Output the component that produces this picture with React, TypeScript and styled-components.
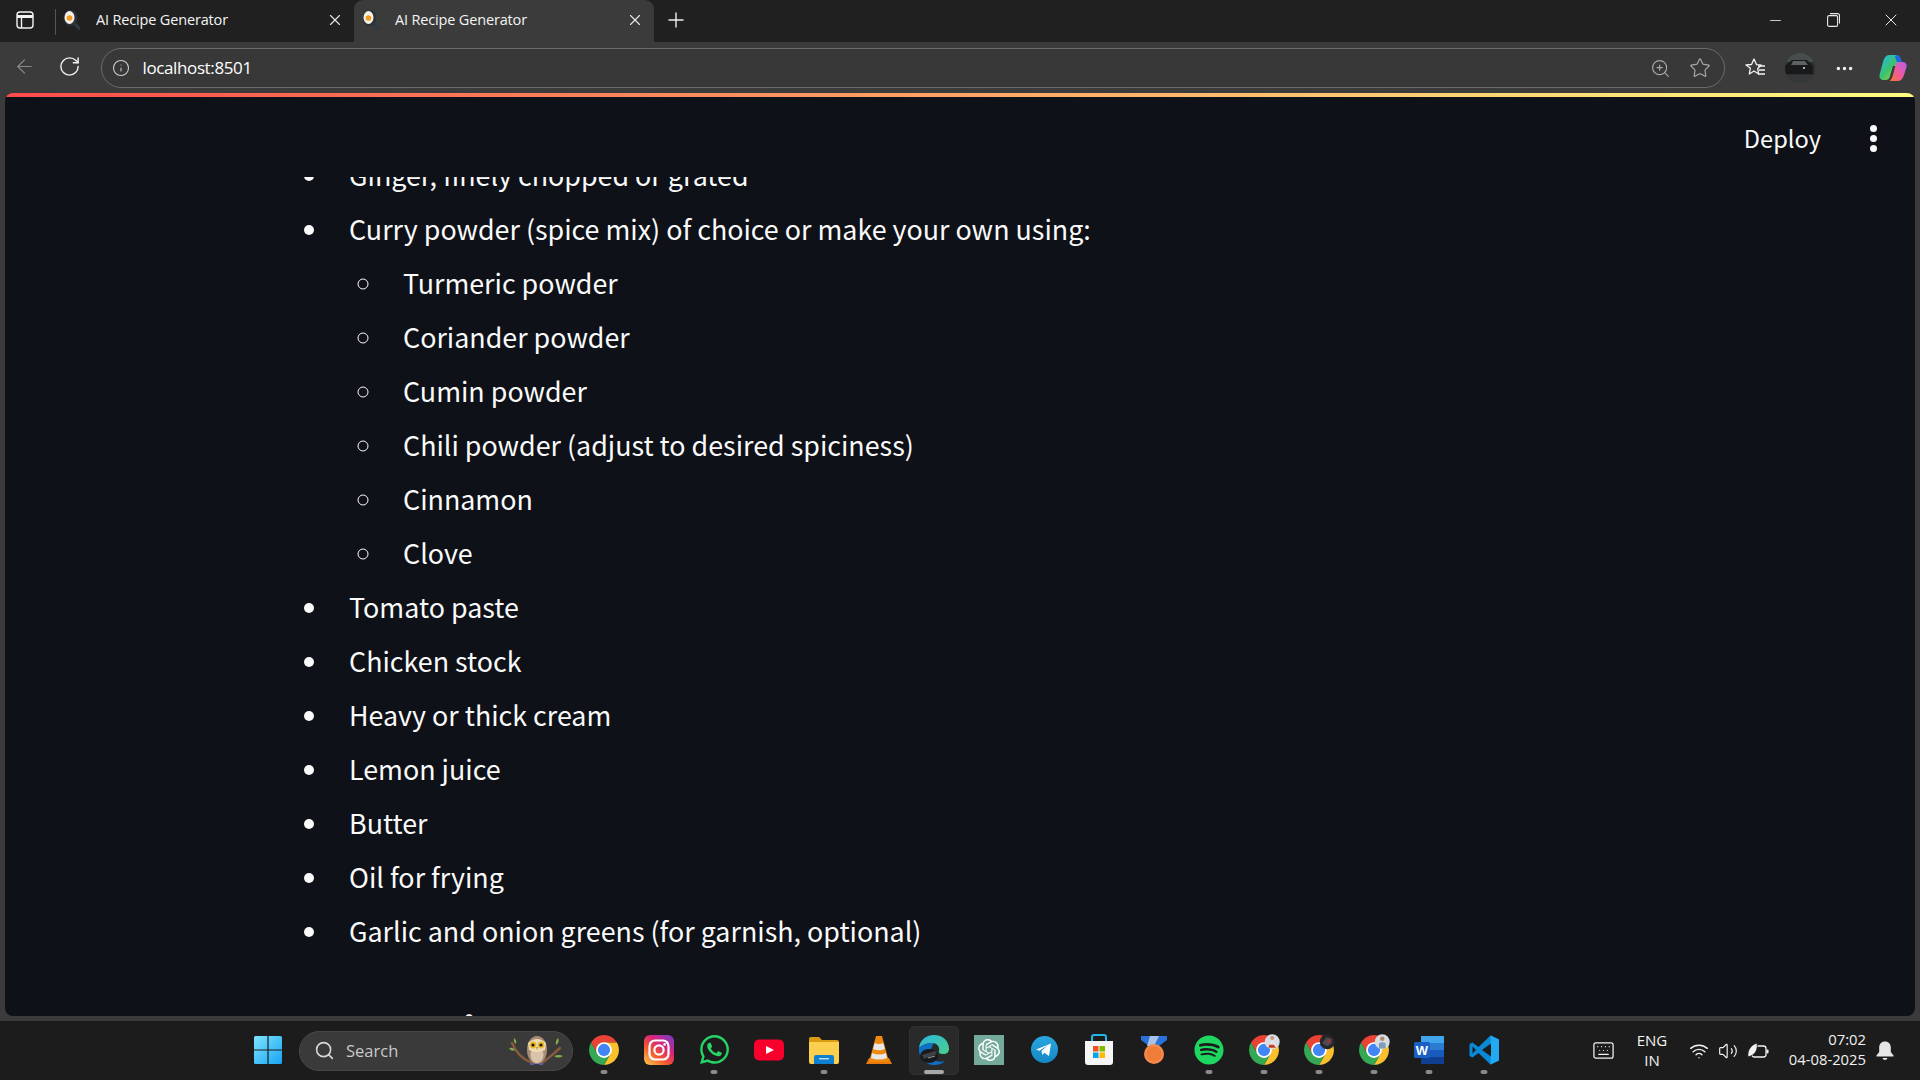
import React from "react";
import { createGlobalStyle, styled } from "styled-components";
import {
  ArrowLeft,
  Info,
  Keyboard,
  Minus,
  MoreHorizontal,
  Plus,
  RotateCw,
  Search,
  Star,
  Volume2,
  Wifi,
  X,
  ZoomIn,
} from "lucide-react";
import { FaSpotify, FaWhatsapp } from "react-icons/fa";
import { SiOpenai } from "react-icons/si";

const GlobalStyle = createGlobalStyle`
  html, body {
    margin: 0;
    padding: 0;
    height: 100%;
    overflow: hidden;
    background: #3b3b3b;
  }
  #root {
    height: 100%;
  }
`;

const Screen = styled.div`
  display: flex;
  flex-direction: column;
  height: 1080px;
  width: 1920px;
  font-family: "Open Sans", "Noto Sans", sans-serif;
  color: #fff;
`;

/* ---------- tab strip ---------- */

const TabStrip = styled.div`
  display: flex;
  align-items: stretch;
  height: 42px;
  flex: none;
  background: #202020;
`;

const SideButton = styled.div`
  width: 50px;
  display: flex;
  align-items: center;
  justify-content: center;
  padding-bottom: 3px;
`;

const TabDivider = styled.div`
  width: 1px;
  height: 26px;
  margin: 9px 0 0 5px;
  background: #555;
`;

const Tab = styled.div<{ $active?: boolean }>`
  display: flex;
  align-items: center;
  box-sizing: border-box;
  width: ${(p) => (p.$active ? "300px" : "298px")};
  padding: 0 10px 3px ${(p) => (p.$active ? "8px" : "7px")};
  border-radius: 9px 9px 0 0;
  background: ${(p) => (p.$active ? "#3b3b3b" : "transparent")};
`;

const TabTitle = styled.span`
  flex: 1;
  margin-left: 15px;
  font-size: 14.5px;
  letter-spacing: -0.16px;
  color: #f4f4f4;
`;

const NewTab = styled.div`
  width: 44px;
  display: flex;
  align-items: center;
  justify-content: center;
  padding-bottom: 3px;
  color: #f0f0f0;
`;

const WindowControls = styled.div`
  margin-left: auto;
  display: flex;
  color: #e8e8e8;
`;

const WindowButton = styled.div`
  width: 58px;
  display: flex;
  align-items: center;
  justify-content: center;
  padding-bottom: 2px;
`;

/* ---------- toolbar ---------- */

const Toolbar = styled.div`
  display: flex;
  align-items: center;
  height: 51px;
  flex: none;
  padding: 0 0 2px 2px;
  box-sizing: border-box;
  background: #3b3b3b;
  color: #f0f0f0;
`;

const NavButton = styled.div<{ $dim?: boolean }>`
  width: 45px;
  display: flex;
  justify-content: center;
  color: ${(p) => (p.$dim ? "#8a8a8a" : "#f2f2f2")};
`;

const Omnibox = styled.div`
  display: flex;
  align-items: center;
  box-sizing: border-box;
  width: 1624px;
  height: 40px;
  margin-left: 8.5px;
  margin-top: 3px;
  padding: 0 13px 0 10px;
  border: 1.5px solid #6b6b6b;
  border-radius: 20px;
  background: #383838;
`;

const Url = styled.span`
  margin-left: 13px;
  padding-bottom: 2px;
  font-size: 17px;
  letter-spacing: -0.38px;
  color: #fff;
`;

const OmniActions = styled.div`
  margin-left: auto;
  display: flex;
  align-items: center;
  gap: 18px;
  color: #a8a8a8;
`;

const ToolbarActions = styled.div`
  display: flex;
  align-items: center;
  margin-top: 3px;
  padding-left: 15px;
  gap: 15px;
`;

const ActionSlot = styled.div`
  width: 30px;
  height: 30px;
  display: flex;
  align-items: center;
  justify-content: center;
`;

const CopilotSlot = styled(ActionSlot)`
  margin-left: 3px;
`;

/* ---------- page ---------- */

const ViewportFrame = styled.div`
  flex: 1;
  min-height: 0;
  display: flex;
  padding: 0 5px 5px 5px;
  background: #3b3b3b;
`;

const Page = styled.div`
  flex: 1;
  display: flex;
  flex-direction: column;
  overflow: hidden;
  border-radius: 8px;
  background: #0e1117;
  font-family: "Noto Sans CJK SC", "Noto Sans", sans-serif;
`;

const Decoration = styled.div`
  height: 4px;
  flex: none;
  background: linear-gradient(90deg, #ff4b4b, #fffd80);
`;

const Header = styled.div`
  height: 80px;
  flex: none;
  display: flex;
  align-items: flex-start;
  justify-content: flex-end;
  padding: 23px 38px 0 0;
  box-sizing: border-box;
`;

const DeployLabel = styled.span`
  font-size: 23.6px;
  line-height: 36px;
  margin-right: 49px;
  color: #fafafa;
`;

const Kebab = styled.div`
  display: flex;
  flex-direction: column;
  gap: 3px;
  padding-top: 5px;
`;

const KebabDot = styled.span`
  width: 7px;
  height: 7px;
  border-radius: 50%;
  background: #fafafa;
`;

const Scroller = styled.div`
  flex: 1;
  min-height: 0;
  overflow: hidden;
  padding-left: 293px;
`;

const Document = styled.div`
  margin-top: -29px;
`;

const List = styled.ul<{ $nested?: boolean }>`
  margin: 0;
  padding: 0 0 0 ${(p) => (p.$nested ? "35.5px" : "32.5px")};
  list-style-type: ${(p) => (p.$nested ? "circle" : "disc")};
`;

const Item = styled.li`
  padding-left: 18.5px;
  font-size: 26.85px;
  line-height: 54px;
  color: #fafafa;
`;

const SectionHeading = styled.h4`
  margin: 46px 0 0 -2px;
  font-size: 43px;
  line-height: 52px;
  font-weight: 700;
  color: #fafafa;
`;

/* ---------- taskbar ---------- */

const Taskbar = styled.div`
  display: flex;
  align-items: center;
  height: 59px;
  flex: none;
  padding-left: 240px;
  background: #1c1c1c;
`;

const Cell = styled.div<{ $active?: boolean }>`
  position: relative;
  width: 55px;
  height: 49px;
  flex: none;
  display: flex;
  align-items: center;
  justify-content: center;
  box-sizing: border-box;
  padding-bottom: 2px;
  &::before {
    content: "";
    position: absolute;
    inset: 0 2.5px;
    border-radius: 5px;
    background: ${(p) => (p.$active ? "#2a2a2a" : "transparent")};
    border: ${(p) => (p.$active ? "1px solid #303030" : "none")};
    box-sizing: border-box;
  }
  & > svg {
    position: relative;
  }
`;

const RunDot = styled.span<{ $active?: boolean }>`
  position: absolute;
  bottom: 1px;
  left: 50%;
  transform: translateX(-50%);
  width: ${(p) => (p.$active ? "20px" : "7px")};
  height: 4px;
  border-radius: 2px;
  background: ${(p) => (p.$active ? "#a8a8a8" : "#8a8a8a")};
`;

const SearchPill = styled.div`
  display: flex;
  align-items: center;
  box-sizing: border-box;
  width: 274px;
  height: 40px;
  margin: 0 3.5px 0 4px;
  padding: 0 8px 0 14px;
  border-radius: 20px;
  border: 1px solid #484848;
  background: #3a3a3a;
  color: #d8d8d8;
`;

const SearchLabel = styled.span`
  margin-left: 11px;
  flex: 1;
  font-size: 16.5px;
  color: #c9c9c9;
`;

const Tray = styled.div`
  margin-left: auto;
  display: flex;
  align-items: center;
  padding-right: 26px;
  color: #f2f2f2;
`;

const LangBlock = styled.div`
  width: 50px;
  margin: 0 12px 0 12px;
  padding-bottom: 2px;
  text-align: center;
  font-size: 15px;
  line-height: 20px;
`;

const TrayIcons = styled.div`
  display: flex;
  align-items: center;
  gap: 9px;
`;

const Clock = styled.div`
  margin-left: 7px;
  padding-bottom: 3px;
  width: 90px;
  text-align: right;
  font-size: 14.8px;
  line-height: 20px;
`;

const BellSlot = styled.div`
  margin-left: 10px;
  display: flex;
`;

/* ---------- drawn icons ---------- */

function SidebarIcon() {
  return (
    <svg width="18" height="18" viewBox="0 0 18 18" fill="none" stroke="#f2f2f2" strokeWidth="1.4">
      <rect x="1" y="1" width="16" height="16" rx="3" />
      <path d="M1 5.5h16" strokeWidth="3" />
      <path d="M5.5 5.5V17" />
    </svg>
  );
}

function Favicon() {
  return (
    <svg width="18" height="20" viewBox="0 0 18 20" style={{ flex: "none" }}>
      <path d="M11 13l5 5.5" stroke="#2e3a44" strokeWidth="3" strokeLinecap="round" />
      <ellipse cx="7.5" cy="8" rx="7" ry="8" fill="#2c3238" />
      <ellipse cx="6.5" cy="7.5" rx="5" ry="6.5" fill="#f4f2ea" />
      <circle cx="6.5" cy="8" r="2.8" fill="#f59a1c" />
    </svg>
  );
}

function Chrome({ badge }: { badge?: "light" | "dark" | "man" }) {
  return (
    <svg width="36" height="36" viewBox="0 0 48 48">
      <path d="M41.3 14A20 20 0 0 0 6.7 14L15.3 29 24 24V14Z" fill="#ea4335" />
      <path d="M41.3 14H24L32.7 29 24 44A20 20 0 0 0 41.3 14Z" fill="#fbc02d" />
      <path d="M6.7 14L15.3 29H32.7L24 44A20 20 0 0 1 6.7 14Z" fill="#34a853" />
      <circle cx="24" cy="24" r="10.5" fill="#fff" />
      <circle cx="24" cy="24" r="8.2" fill="#4285f4" />
      {badge && (
        <g>
          <circle
            cx="35"
            cy="13"
            r="10"
            fill={badge === "dark" ? "#26262a" : "#d8dde2"}
          />
          {badge === "light" && (
            <>
              <circle cx="35" cy="8" r="2.6" fill="#c79a7c" />
              <path d="M32 20l1.5-9h4l2.5 9z" fill="#e3e3e3" />
              <path d="M30 21h10l-3-4h-6z" fill="#c63a22" />
            </>
          )}
          {badge === "dark" && (
            <>
              <path d="M28 15l6-8 7 2v6l-6 4z" fill="#4a4a50" />
              <circle cx="37" cy="12" r="2.4" fill="#a23030" />
            </>
          )}
          {badge === "man" && (
            <>
              <circle cx="35" cy="9" r="3" fill="#b58a6c" />
              <path d="M30.5 22v-7q4.5-3 9 0v7z" fill="#7f9cbc" />
            </>
          )}
        </g>
      )}
    </svg>
  );
}

function WindowsLogo() {
  return (
    <svg width="30" height="30" viewBox="0 0 30 30">
      <defs>
        <linearGradient id="winA" x1="0" y1="0" x2="1" y2="1">
          <stop offset="0" stopColor="#7fe4ff" />
          <stop offset="1" stopColor="#18a4f2" />
        </linearGradient>
      </defs>
      <path
        d="M1 2.5a1.5 1.5 0 0 1 1.5-1.5H14.4V14.4H1ZM15.6 1H27.5A1.5 1.5 0 0 1 29 2.5V14.4H15.6ZM1 15.6H14.4V29H2.5A1.5 1.5 0 0 1 1 27.5ZM15.6 15.6H29V27.5A1.5 1.5 0 0 1 27.5 29H15.6Z"
        fill="url(#winA)"
      />
    </svg>
  );
}

function Owl() {
  return (
    <svg width="56" height="34" viewBox="0 0 56 34" style={{ flex: "none" }}>
      <path d="M4 9q6 14 18 19l12 1 10-8 8-7" stroke="#8a5a3c" strokeWidth="2.4" fill="none" strokeLinecap="round" />
      <path d="M6 4q3 2 2 6-3-2-2-6zM1 14q4-1 6 2-4 2-6-2zM50 4q2 4-2 7-1-4 2-7zM46 22q5-2 9 0-5 3-9 0z" fill="#7fae4a" />
      <ellipse cx="29" cy="16" rx="10" ry="14" fill="#a98a74" />
      <ellipse cx="29" cy="21" rx="6.5" ry="8" fill="#d8c3ab" />
      <path d="M20 9q9-8 18 0l-1 7q-8 4-16 0z" fill="#ecdcb4" />
      <circle cx="25" cy="11" r="3.4" fill="#e8b92e" />
      <circle cx="33" cy="11" r="3.4" fill="#e8b92e" />
      <circle cx="25" cy="11" r="1.6" fill="#1c1c1c" />
      <circle cx="33" cy="11" r="1.6" fill="#1c1c1c" />
      <path d="M28 13h2l-1 3z" fill="#c88a2c" />
      <path d="M22 29h4v2h-4zM31 29h4v2h-4z" fill="#5a5cb0" />
    </svg>
  );
}

function Instagram() {
  return (
    <svg width="30" height="30" viewBox="0 0 30 30">
      <defs>
        <linearGradient id="ig" x1="0.1" y1="1" x2="0.9" y2="0">
          <stop offset="0" stopColor="#fdc24c" />
          <stop offset="0.35" stopColor="#f4582c" />
          <stop offset="0.65" stopColor="#d9247c" />
          <stop offset="1" stopColor="#7a3cc4" />
        </linearGradient>
      </defs>
      <rect width="30" height="30" rx="6" fill="url(#ig)" />
      <rect x="5.5" y="5.5" width="19" height="19" rx="5.5" fill="none" stroke="#fff" strokeWidth="2.2" />
      <circle cx="15" cy="15" r="4.6" fill="none" stroke="#fff" strokeWidth="2.2" />
      <circle cx="20.6" cy="9.4" r="1.3" fill="#fff" />
    </svg>
  );
}

function Youtube() {
  return (
    <svg width="30" height="22" viewBox="0 0 30 22">
      <rect width="30" height="21" y="0.5" rx="5" fill="#f8002b" />
      <path d="M12 7l8 4-8 4z" fill="#fff" />
    </svg>
  );
}

function Folder() {
  return (
    <svg width="30" height="28" viewBox="0 0 30 28">
      <path d="M0 3a2 2 0 0 1 2-2h8l3 3h15a2 2 0 0 1 2 2v4H0z" fill="#d99c12" />
      <path d="M0 6h30v20a2 2 0 0 1-2 2H2a2 2 0 0 1-2-2z" fill="#fbd04f" />
      <path d="M5 21a2 2 0 0 1 2-2h16a2 2 0 0 1 2 2v7H5z" fill="#0f7fd0" />
      <rect x="10" y="22" width="10" height="1.4" fill="#bfe2fb" />
    </svg>
  );
}

function Vlc() {
  return (
    <svg width="26" height="30" viewBox="0 0 26 30">
      <path d="M0 29l3-6h20l3 6z" fill="#e87a0a" />
      <path d="M10 1h6l7 26H3z" fill="#f08a0f" />
      <path d="M8.7 8q4.3 2 8.6 0l1.6 6q-5.9 2.6-11.8 0z" fill="#e8e8e8" />
      <path d="M6.2 18q6.8 3 13.6 0l1.3 5q-8.1 3-16.2 0z" fill="#e8e8e8" />
    </svg>
  );
}

function Edge() {
  return (
    <svg width="32" height="32" viewBox="0 0 32 32">
      <defs>
        <linearGradient id="edgeA" x1="0" y1="0" x2="1" y2="1">
          <stop offset="0" stopColor="#2fb5e0" />
          <stop offset="1" stopColor="#48d08a" />
        </linearGradient>
      </defs>
      <path d="M1 14C2 5 9 1 16 1c9 0 15 6 15 14 0 3-2 5-6 5-3 0-5-1-4-3 1-3-1-8-7-8-6 0-11 3-13 5z" fill="url(#edgeA)" />
      <path d="M1 14c-1 9 6 17 15 17 4 0 8-1 11-4-6 2-13 0-14-7-1-5 2-9 3-11C9 9 3 11 1 14z" fill="#0f6fc4" />
      <ellipse cx="11" cy="22" rx="9" ry="7" fill="#17191c" />
      <path d="M4 21l13-4 2 3-13 5z" fill="#3e4246" />
      <path d="M10 24l7-2" stroke="#9a9a9a" strokeWidth="1" />
    </svg>
  );
}

function ChatGpt() {
  return (
    <svg width="30" height="30" viewBox="0 0 30 30">
      <rect width="30" height="30" fill="#74aa9c" />
      <SiOpenai x="4" y="4" size={22} color="#fff" />
    </svg>
  );
}

function Telegram() {
  return (
    <svg width="27" height="27" viewBox="0 0 27 27">
      <defs>
        <linearGradient id="tg" x1="0.5" y1="0" x2="0.5" y2="1">
          <stop offset="0" stopColor="#2aa6e0" />
          <stop offset="1" stopColor="#1488c4" />
        </linearGradient>
      </defs>
      <circle cx="13.5" cy="13.5" r="13.5" fill="url(#tg)" />
      <path d="M5 13.5L20 7.5 18 20l-4.5-3.3-2.3 2.3-.6-4L17 9l-8.5 5.8z" fill="#fff" />
    </svg>
  );
}

function Store() {
  return (
    <svg width="30" height="32" viewBox="0 0 30 32">
      <path d="M8 8V3a2 2 0 0 1 2-2h10a2 2 0 0 1 2 2v5" fill="none" stroke="#21b6ea" strokeWidth="2" />
      <path d="M1 7h28v21a3 3 0 0 1-3 3H4a3 3 0 0 1-3-3z" fill="#f5f5f5" />
      <rect x="9" y="12" width="5.5" height="5.5" fill="#f25022" />
      <rect x="15.5" y="12" width="5.5" height="5.5" fill="#7fba00" />
      <rect x="9" y="18.5" width="5.5" height="5.5" fill="#00a4ef" />
      <rect x="15.5" y="18.5" width="5.5" height="5.5" fill="#ffb900" />
    </svg>
  );
}

function Medal() {
  return (
    <svg width="28" height="30" viewBox="0 0 28 30">
      <path d="M1 1h26v4l-8 6H9L1 5z" fill="#2a72d8" />
      <path d="M10 1h9l-5 10H7z" fill="#a9c2ea" />
      <circle cx="14" cy="19" r="10" fill="#f68a4a" />
      <circle cx="14" cy="19" r="7.5" fill="#f07c3a" />
    </svg>
  );
}

function Word() {
  return (
    <svg width="30" height="28" viewBox="0 0 30 28">
      <rect x="7" y="0" width="23" height="7" fill="#41a5ee" />
      <rect x="7" y="7" width="23" height="7" fill="#2b7cd3" />
      <rect x="7" y="14" width="23" height="7" fill="#185abd" />
      <rect x="7" y="21" width="23" height="7" fill="#103f91" />
      <rect x="0" y="6" width="16" height="16" rx="1.5" fill="#1a5fc4" />
      <text x="8" y="18.5" textAnchor="middle" fontFamily="'Liberation Sans', sans-serif" fontWeight="700" fontSize="13" fill="#fff">
        W
      </text>
    </svg>
  );
}

function VsCode() {
  return (
    <svg width="30" height="30" viewBox="0 0 30 30">
      <path d="M21.5 0.5L9.5 12 3.5 7.5 0.5 9v12l3 1.5 6-4.5 12 11.5L30 25.5v-21z" fill="#0a8ad6" />
      <path d="M21.5 0.5L30 4.5v21l-8.5 4z" fill="#23a8f2" />
      <path d="M22 8.5L13 15l9 6.5z" fill="#1c1c1c" />
      <path d="M3.5 11.5L7 15l-3.5 3.5z" fill="#1c1c1c" />
    </svg>
  );
}

function Bell() {
  return (
    <svg width="18" height="20" viewBox="0 0 18 20">
      <path d="M9 0.5c3.6 0 5.8 2.6 5.8 6V11l2.700 3.600c.3.5 0 1-.6 1H1.100c-.6 0-.9-.5-.6-1L3.200 11V6.500c0-3.400 2.200-6 5.800-6z" fill="#e6e6e6" />
      <path d="M6.5 17a2.600 2.600 0 0 0 5 0z" fill="#e6e6e6" />
    </svg>
  );
}

function BatteryLeaf() {
  return (
    <svg width="22" height="18" viewBox="0 0 22 18" fill="none">
      <rect x="5" y="4" width="14" height="11" rx="2.5" stroke="#f2f2f2" strokeWidth="1.3" />
      <rect x="19.5" y="7.5" width="2" height="4" rx="0.8" fill="#f2f2f2" />
      <path d="M1 15C0 8 4 3 10 1c1 6-1 12-9 14z" fill="#f2f2f2" stroke="#1c1c1c" strokeWidth="0.8" />
    </svg>
  );
}

function FavoritesIcon() {
  return (
    <svg width="22" height="22" viewBox="0 0 22 22" fill="none" stroke="#f4f4f4" strokeWidth="1.3" strokeLinejoin="round">
      <path d="M10 2l2.5 5.600 5 .5-3.800 3.500 1 5.400L10 14l-4.700 3 1-5.900L2 7.900l5.500-.4z" />
      <path d="M14 9h7M15 13h6M14 17h7" />
    </svg>
  );
}

function Avatar() {
  return (
    <svg width="30" height="30" viewBox="0 0 30 30">
      <defs>
        <clipPath id="avatarClip">
          <circle cx="15" cy="15" r="15" />
        </clipPath>
      </defs>
      <g clipPath="url(#avatarClip)">
        <rect width="30" height="30" fill="#2c3033" />
        <path d="M0 0h30v9H0z" fill="#474c4e" />
        <path d="M0 13l7-6h15l6 6v8H0z" fill="#17191b" />
        <path d="M8 8h12l3 4H6z" fill="#5c6264" />
        <path d="M0 22h30v8H0z" fill="#34383a" />
        <circle cx="19" cy="15" r="1" fill="#ddd" />
      </g>
    </svg>
  );
}

function Copilot() {
  return (
    <svg width="28" height="28" viewBox="0 0 28 28">
      <defs>
        <linearGradient id="copA" x1="0" y1="0" x2="1" y2="1">
          <stop offset="0" stopColor="#22b8f0" />
          <stop offset="0.5" stopColor="#3ac46a" />
          <stop offset="1" stopColor="#f0d030" />
        </linearGradient>
        <linearGradient id="copB" x1="1" y1="0" x2="0" y2="1">
          <stop offset="0" stopColor="#b060f0" />
          <stop offset="0.55" stopColor="#f05a9a" />
          <stop offset="1" stopColor="#f87a28" />
        </linearGradient>
      </defs>
      <path d="M10 1h7c2 0 3 1 3.5 3L23 12H14L11 22c-1 3-2 4-5 4H5C2 26 0 24 0.5 21L4 8c1-4 3-7 6-7z" fill="url(#copA)" />
      <path d="M12 27h7c3 0 5-3 6-6l2.5-8c.8-3-1-5-4-5H20l-3 1-3 12c-.5 2-1.5 4-3 6z" fill="url(#copB)" />
      <path d="M17 1h1c2 0 3 1 3.5 3L23 8h-5L16 3z" fill="#1d68e0" />
    </svg>
  );
}

type TaskApp = {
  icon: React.ReactNode;
  running?: boolean;
  active?: boolean;
};

const apps: TaskApp[] = [
  { icon: <Chrome />, running: true },
  { icon: <Instagram /> },
  { icon: <FaWhatsapp size={33} color="#25d366" />, running: true },
  { icon: <Youtube /> },
  { icon: <Folder />, running: true },
  { icon: <Vlc /> },
  { icon: <Edge />, running: true, active: true },
  { icon: <ChatGpt /> },
  { icon: <Telegram /> },
  { icon: <Store /> },
  { icon: <Medal /> },
  { icon: <FaSpotify size={30} color="#1ed760" />, running: true },
  { icon: <Chrome badge="light" />, running: true },
  { icon: <Chrome badge="dark" />, running: true },
  { icon: <Chrome badge="man" />, running: true },
  { icon: <Word />, running: true },
  { icon: <VsCode />, running: true },
];

const spices = [
  "Turmeric powder",
  "Coriander powder",
  "Cumin powder",
  "Chili powder (adjust to desired spiciness)",
  "Cinnamon",
  "Clove",
];

const otherIngredients = [
  "Tomato paste",
  "Chicken stock",
  "Heavy or thick cream",
  "Lemon juice",
  "Butter",
  "Oil for frying",
  "Garlic and onion greens (for garnish, optional)",
];

export default function App() {
  return (
    <Screen>
      <GlobalStyle />
      <TabStrip>
        <SideButton>
          <SidebarIcon />
        </SideButton>
        <TabDivider />
        <Tab>
          <Favicon />
          <TabTitle>AI Recipe Generator</TabTitle>
          <X size={18} strokeWidth={1.5} color="#e8e8e8" />
        </Tab>
        <Tab $active>
          <Favicon />
          <TabTitle>AI Recipe Generator</TabTitle>
          <X size={18} strokeWidth={1.5} color="#e8e8e8" />
        </Tab>
        <NewTab>
          <Plus size={24} strokeWidth={1.4} />
        </NewTab>
        <WindowControls>
          <WindowButton>
            <Minus size={17} strokeWidth={1.2} />
          </WindowButton>
          <WindowButton>
            <svg width="13" height="14" viewBox="0 0 13 14" fill="none" stroke="#e8e8e8" strokeWidth="1.1">
              <rect x="0.6" y="2.6" width="10" height="10.8" rx="1.5" />
              <path d="M3 .6h7.500a2 2 0 0 1 2 2v8" />
            </svg>
          </WindowButton>
          <WindowButton>
            <X size={20} strokeWidth={1.2} />
          </WindowButton>
        </WindowControls>
      </TabStrip>

      <Toolbar>
        <NavButton $dim>
          <ArrowLeft size={23} strokeWidth={1.2} />
        </NavButton>
        <NavButton>
          <RotateCw size={23} strokeWidth={1.5} />
        </NavButton>
        <Omnibox>
          <Info size={18} strokeWidth={1.4} color="#d0d0d0" />
          <Url>localhost:8501</Url>
          <OmniActions>
            <ZoomIn size={21} strokeWidth={1.3} />
            <Star size={22} strokeWidth={1.3} />
          </OmniActions>
        </Omnibox>
        <ToolbarActions>
          <ActionSlot>
            <FavoritesIcon />
          </ActionSlot>
          <ActionSlot>
            <Avatar />
          </ActionSlot>
          <ActionSlot>
            <MoreHorizontal size={21} strokeWidth={2} />
          </ActionSlot>
          <CopilotSlot>
            <Copilot />
          </CopilotSlot>
        </ToolbarActions>
      </Toolbar>

      <ViewportFrame>
        <Page>
          <Decoration />
          <Header>
            <DeployLabel>Deploy</DeployLabel>
            <Kebab>
              <KebabDot />
              <KebabDot />
              <KebabDot />
            </Kebab>
          </Header>
          <Scroller>
            <Document>
              <List>
                <Item>Ginger, finely chopped or grated</Item>
                <Item>
                  Curry powder (spice mix) of choice or make your own using:
                  <List $nested>
                    {spices.map((spice) => (
                      <Item key={spice}>{spice}</Item>
                    ))}
                  </List>
                </Item>
                {otherIngredients.map((item) => (
                  <Item key={item}>{item}</Item>
                ))}
              </List>
              <SectionHeading>Instructions:</SectionHeading>
            </Document>
          </Scroller>
        </Page>
      </ViewportFrame>

      <Taskbar>
        <Cell>
          <WindowsLogo />
        </Cell>
        <SearchPill>
          <Search size={21} strokeWidth={1.8} />
          <SearchLabel>Search</SearchLabel>
          <Owl />
        </SearchPill>
        {apps.map((app, i) => (
          <Cell key={i} $active={app.active}>
            {app.icon}
            {app.running && <RunDot $active={app.active} />}
          </Cell>
        ))}
        <Tray>
          <Keyboard size={23} strokeWidth={1.3} />
          <LangBlock>
            ENG
            <br />
            IN
          </LangBlock>
          <TrayIcons>
            <Wifi size={20} strokeWidth={1.7} />
            <Volume2 size={20} strokeWidth={1.4} />
            <BatteryLeaf />
          </TrayIcons>
          <Clock>
            07:02
            <br />
            04-08-2025
          </Clock>
          <BellSlot>
            <Bell />
          </BellSlot>
        </Tray>
      </Taskbar>
    </Screen>
  );
}
